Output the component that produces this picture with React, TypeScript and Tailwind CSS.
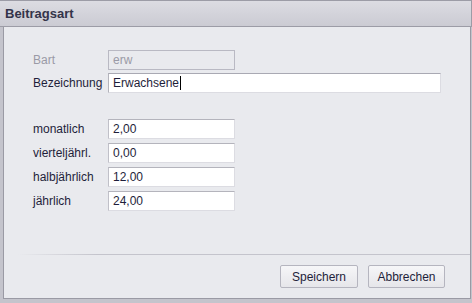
const betraege = [
  { label: 'monatlich', value: '2,00' },
  { label: 'vierteljährl.', value: '0,00' },
  { label: 'halbjährlich', value: '12,00' },
  { label: 'jährlich', value: '24,00' },
];

const font = { fontFamily: '"Liberation Sans", Arial, sans-serif' };

export default function App() {
  return (
    <div className="flex h-[303px] w-[472px] flex-col bg-[#c4c4cc] text-[12px] text-[#1e1e3a]" style={font}>
      {/* Titelleiste */}
      <div className="flex h-[27px] shrink-0 items-center border-y border-r border-[#9c9ca6] bg-gradient-to-b from-[#dcdce2] to-[#cbcbd3] pl-[5px]">
        <span className="text-[13px] font-bold text-[#34344a]">Beitragsart</span>
      </div>

      <div className="ml-[3px] mr-px flex h-[272px] flex-col border-x border-b border-[#9a9aa4] bg-[#e9eaee]">
        <div className="flex flex-col pl-[29px] pt-[23px]">
          <div className="flex h-[20px] items-center">
            <span className="w-[75px] text-[#9a9aa6]">Bart</span>
            <div className="flex h-[20px] w-[127px] items-center border border-[#b9b9c3] bg-[#e9eaee] px-[4px] text-[#9a9aa6]">erw</div>
          </div>
          <div className="mt-[3px] flex h-[20px] items-center">
            <span className="w-[75px]">Bezeichnung</span>
            <div className="flex h-[20px] w-[333px] items-center border border-[#dcdce2] border-t-[#a9a9b3] border-l-[#b4b4bc] bg-white px-[4px]">
              Erwachsene
              <span className="ml-px h-[14px] w-px bg-black" />
            </div>
          </div>

          <div className="mt-[26px] flex flex-col gap-[4px]">
            {betraege.map((b) => (
              <div key={b.label} className="flex h-[20px] items-center">
                <span className="w-[75px]">{b.label}</span>
                <div className="flex h-[20px] w-[127px] items-center border border-[#dcdce2] border-t-[#b4b4bc] border-l-[#c0c0c8] bg-white px-[4px]">
                  {b.value}
                </div>
              </div>
            ))}
          </div>
        </div>

        {/* Trennlinie */}
        <div className="mt-auto mb-[10px] h-px bg-gradient-to-r from-transparent from-[3%] via-[#c4c4cc] via-[20%] to-[#c4c4cc]" />

        <div className="mb-[10px] flex justify-end gap-[10px] pr-[25px]">
          <button className="h-[23px] w-[78px] rounded-[2px] border border-[#b5b5bf] bg-gradient-to-b from-[#f6f6f8] to-[#e6e6ea] text-[12px] text-[#1e1e3a]" style={font}>
            Speichern
          </button>
          <button className="h-[23px] w-[77px] rounded-[2px] border border-[#b5b5bf] bg-gradient-to-b from-[#f6f6f8] to-[#e6e6ea] text-[12px] text-[#1e1e3a]" style={font}>
            Abbrechen
          </button>
        </div>
      </div>
    </div>
  );
}
